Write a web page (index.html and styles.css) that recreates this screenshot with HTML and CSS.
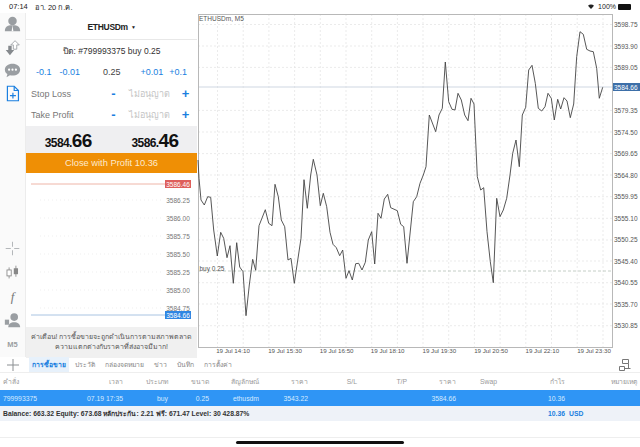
FILE: index.html
```html
<!DOCTYPE html>
<html lang="th">
<head>
<meta charset="utf-8">
<title>ETHUSDm</title>
<link rel="stylesheet" href="styles.css">
</head>
<body>
<div class="screen">
  <header class="status">
    <span class="clock">07:14</span><span>อา. 20 ก.ค.</span>
    <span class="status-right">
      <svg class="wifi" viewBox="0 0 10 8" width="6" height="5"><path d="M0 2.6a7 7 0 0 1 10 0L5 8z" fill="#222"/></svg>
      <span class="pct">100%</span>
      <span class="battery"></span>
    </span>
  </header>

  <main class="workspace">
    <nav class="rail">
      <div class="rail-group">
        <svg class="rail-icon" viewBox="0 0 20 20" width="20" height="20"><circle cx="10" cy="6" r="5" fill="#9a9ea2"/><path d="M1 18c0-5 3-6.500 6-7h6c3 .5 6 2 6 7z" fill="#9a9ea2"/><path d="M10 11l-1 7h2z" fill="#fff"/></svg>
        <svg class="rail-icon" viewBox="0 0 20 20" width="20" height="20"><path d="M5 8h4v5h3l-5 6-5-6h3z" fill="#85898d"/><path d="M13 2l5 5h-3v5h-4V7H8z" fill="#fff" stroke="#9a9ea2"/></svg>
        <svg class="rail-icon" viewBox="0 0 20 20" width="20" height="20"><path d="M10 2c5 0 9 3 9 7s-4 7-9 7c-1 0-2 0-3-.3L3 18l1-4c-2-1-3-3-3-5 0-4 4-7 9-7z" fill="#9a9ea2"/><circle cx="6" cy="9" r="1.300" fill="#fff"/><circle cx="10" cy="9" r="1.300" fill="#fff"/><circle cx="14" cy="9" r="1.300" fill="#fff"/></svg>
        <svg class="rail-icon" viewBox="0 0 20 20" width="20" height="20"><path d="M4 1.500h8l5 5v12H4z" fill="none" stroke="#1a7fe0" stroke-width="1.400"/><path d="M12 1.500v5h5M10.500 9v7M7 12.500h7" fill="none" stroke="#1a7fe0" stroke-width="1.400"/></svg>
      </div>
      <div class="rail-group">
        <svg class="rail-icon" viewBox="0 0 20 20" width="20" height="20"><path d="M10 2v6M10 12v6M2 10h6M12 10h6" stroke="#b4b7ba" stroke-width="1.200"/></svg>
        <svg class="rail-icon" viewBox="0 0 20 20" width="20" height="20"><path d="M6 4v13M14 2v13" stroke="#888" stroke-width="1"/><rect x="3.500" y="7" width="5" height="7" fill="#fff" stroke="#888"/><rect x="11.500" y="5" width="5" height="7" fill="#888"/></svg>
        <span class="rail-f">f</span>
        <svg class="rail-icon" viewBox="0 0 20 20" width="20" height="20"><circle cx="12" cy="6" r="4.500" fill="#9a9ea2"/><path d="M5 18c0-4 3-6 7-6s7 2 7 6z" fill="#9a9ea2"/><rect x="1" y="9" width="5" height="6" fill="#9a9ea2"/></svg>
        <span class="rail-m5">M5</span>
      </div>
    </nav>

    <section class="panel">
      <div class="symbol">ETHUSDm <span class="caret">▼</span></div>
      <div class="order-title">ปิด: #799993375 buy 0.25</div>
      <div class="volume">
        <span class="step">-0.1</span><span class="step">-0.01</span>
        <span class="vol-value">0.25</span>
        <span class="step step-near">+0.01</span><span class="step">+0.1</span>
      </div>
      <div class="level"><span class="level-name">Stop Loss</span><span class="adj">-</span><span class="level-value">ไม่อนุญาต</span><span class="adj">+</span></div>
      <div class="level"><span class="level-name">Take Profit</span><span class="adj">-</span><span class="level-value">ไม่อนุญาต</span><span class="adj">+</span></div>
      <div class="prices">
        <div class="price">3584.<b>66</b></div>
        <div class="price">3586.<b>46</b></div>
      </div>
      <button class="close-btn">Close with Profit 10.36</button>
      <svg class="mini" viewBox="26 172 171 154" width="171" height="154">
        <path class="mini-grid" d="M40 199H163M40 217H163M40 235H163M40 253H163M40 271H163M40 289H163M40 307H163"/>
        <path class="mini-ask" d="M31 183H165"/>
        <path class="mini-bid" d="M31 314H165"/>
        <rect x="165" y="179" width="26" height="8" fill="#de5f5b"/>
        <rect x="165" y="310" width="26" height="8" fill="#2f86e2"/>
        <text class="mini-tag" x="178" y="185.500">3586.46</text>
        <text class="mini-label" x="178" y="201.500">3586.25</text>
        <text class="mini-label" x="178" y="219.500">3586.00</text>
        <text class="mini-label" x="178" y="237.500">3585.75</text>
        <text class="mini-label" x="178" y="255.500">3585.50</text>
        <text class="mini-label" x="178" y="273.500">3585.25</text>
        <text class="mini-label" x="178" y="291.500">3585.00</text>
        <text class="mini-label" x="178" y="309.500">3584.75</text>
        <text class="mini-tag" x="178" y="316.500">3584.66</text>
      </svg>
      <div class="warning">ค่าเตือน! การซื้อขายจะถูกดำเนินการตามสภาพตลาด<br>ความแตกต่างกับราคาที่ส่งอาจมีมาก!</div>
    </section>

    <section class="chart">
      <svg class="chart-svg" viewBox="197 13 443 344" width="443" height="344">
        <path class="grid" d="M217.500 14V347M243.200 14V347M268.900 14V347M294.600 14V347M320.300 14V347M346 14V347M371.700 14V347M397.400 14V347M423 14V347M448.700 14V347M474.400 14V347M500.100 14V347M525.800 14V347M551.500 14V347M577.200 14V347M603 14V347"/>
        <path class="grid" d="M198 24.500H612M198 46H612M198 67.400H612M198 110.400H612M198 132H612M198 153.600H612M198 175H612M198 196.700H612M198 218.300H612M198 240H612M198 261H612M198 282.700H612M198 304H612M198 325.700H612"/>
        <path class="cur-line" d="M198 87H612"/>
        <path class="buy-line" d="M198 271H612"/>
        <rect class="frame" x="198.500" y="14.500" width="414" height="333"/>
        <polyline class="price-line" points="198,160 199,178.300 201,200 204.300,205 207.700,196.700 210.700,197.300 213.700,230 217.300,256 220.700,232.300 223.700,238.300 227,257.700 230,245.700 233.300,283.300 236.700,242.700 239.700,267 243,271.700 246,315.700 249.300,285 252.700,259.300 255.700,270.300 259,225.700 265.300,209.700 268.700,223.300 272,225.700 275,184.300 278.300,196.700 281.300,220 284.700,226.700 288,260 291,258.300 294.300,283.300 301,238.300 304,179.700 307.300,208.300 310.700,175 313.300,159.300 317,175 320.300,205.700 323.300,193.300 326.700,206.700 330,232.300 333,244.300 336.300,247.700 339.700,255.700 342.700,250 346,278.300 349,270.700 352.300,280 355.700,263.700 358.700,263.300 362,270 365.300,262.300 368.300,240 371.700,231.700 374.700,264 378,213.300 381,218.300 384.300,199 387.700,194.300 390.700,207.700 397.300,210.700 400.700,224.300 403.700,226.700 407,263.300 413.300,201.700 416.700,196.700 420,183.300 423.300,175 426,166.700 429.300,115 435.700,131.700 439,115 442.300,108.300 445.300,62 448.700,101.700 452,109.300 455,110 458,93.300 461.300,100 464.700,115 468,120.700 471,98.300 474,104 477.300,176.700 480.700,190 483.700,187.700 487,231.700 490.300,261.700 493.300,282.700 496.700,198.300 500,216.700 503.300,210 506.700,198.300 510,175 512.700,153.300 516,140 519.300,166.700 522.300,115 525.700,107.300 528.700,70 532,65.300 535.300,83.300 538.300,108.300 541.700,111 545,106.700 548,93.300 551.300,98.300 554.300,120 557.700,99.300 560.700,109 564,97.700 567,101 570.300,117.700 573.700,104 576.700,56.700 580,31.700 583.300,34.300 586.700,49.300 590,51 593.300,51.700 596.700,68.300 599.300,98.300 602.700,87.300"/>
        <text class="axis-y" x="199" y="21">ETHUSDm, M5</text>
        <text class="axis-y" x="199.500" y="270.500">buy 0.25</text>
        <rect x="613" y="83" width="27" height="8" fill="#3d6fa8"/>
        <text class="tag" x="614" y="89.500">3584.66</text>
        <text class="axis-y" x="614" y="27">3598.75</text>
        <text class="axis-y" x="614" y="48.500">3593.90</text>
        <text class="axis-y" x="614" y="70">3589.05</text>
        <text class="axis-y" x="614" y="113">3579.35</text>
        <text class="axis-y" x="614" y="134.500">3574.50</text>
        <text class="axis-y" x="614" y="156">3569.65</text>
        <text class="axis-y" x="614" y="177.500">3564.80</text>
        <text class="axis-y" x="614" y="199">3559.95</text>
        <text class="axis-y" x="614" y="220.500">3555.10</text>
        <text class="axis-y" x="614" y="242">3550.25</text>
        <text class="axis-y" x="614" y="263.500">3545.40</text>
        <text class="axis-y" x="614" y="285">3540.55</text>
        <text class="axis-y" x="614" y="306.500">3535.70</text>
        <text class="axis-y" x="614" y="328">3530.85</text>
        <text class="axis mid" x="233" y="353">19 Jul 14:10</text>
        <text class="axis mid" x="285" y="353">19 Jul 15:30</text>
        <text class="axis mid" x="336.700" y="353">19 Jul 16:50</text>
        <text class="axis mid" x="387.700" y="353">19 Jul 18:10</text>
        <text class="axis mid" x="439.300" y="353">19 Jul 19:30</text>
        <text class="axis mid" x="491" y="353">19 Jul 20:50</text>
        <text class="axis mid" x="542.300" y="353">19 Jul 22:10</text>
        <text class="axis mid" x="594" y="353">19 Jul 23:30</text>
      </svg>
    </section>
  </main>

  <nav class="tabs">
    <svg class="tab-plus" viewBox="0 0 12 12" width="12" height="12"><path d="M6 0v12M0 6h12" stroke="#8b8f92" stroke-width="1"/></svg>
    <span class="tab tab-active">การซื้อขาย</span>
    <span class="tab">ประวัติ</span>
    <span class="tab">กล่องจดหมาย</span>
    <span class="tab">ข่าว</span>
    <span class="tab">บันทึก</span>
    <span class="tab">การตั้งค่า</span>
    <svg class="tab-layout" viewBox="0 0 12 12" width="12" height="12"><path d="M3.500 .5h6v4h-6zM.5 7.500h5v4h-5zM5.500 9.500h6M9.500 4.500v5" fill="none" stroke="#777"/></svg>
  </nav>

  <section class="table">
    <div class="row row-head">
      <span class="c-left">คำสั่ง</span><span>เวลา</span><span>ประเภท</span><span>ขนาด</span><span>สัญลักษณ์</span><span>ราคา</span><span>S/L</span><span>T/P</span><span>ราคา</span><span>Swap</span><span>กำไร</span><span>หมายเหตุ</span>
    </div>
    <div class="row row-sel">
      <span class="c-left">799993375</span><span>07.19 17:35</span><span>buy</span><span>0.25</span><span>ethusdm</span><span>3543.22</span><span></span><span></span><span>3584.66</span><span></span><span>10.36</span><span></span>
    </div>
    <div class="row row-total">
      <span class="c-left c-wide">Balance: 663.32 Equity: 673.68 หลักประกัน: 2.21 ฟรี: 671.47 Level: 30 428.87%</span><span class="c-total">10.36</span><span class="c-usd">USD</span>
    </div>
  </section>

  <footer class="home"><span class="home-bar"></span></footer>
</div>
</body>
</html>
```
FILE: styles.css
```css
* { box-sizing: border-box; }
html, body { margin: 0; padding: 0; background: #fff; }
body { font-family: "Liberation Sans", "Noto Sans", sans-serif; color: #333; overflow: hidden; }
.screen { width: 640px; height: 447px; display: flex; flex-direction: column; }

.status { height: 13px; display: flex; align-items: center; padding: 0 9px; font-size: 7.5px; color: #222; gap: 7px; flex: none; }
.status-right { margin-left: auto; display: flex; align-items: center; gap: 2px; }
.pct { font-size: 7px; margin-left: 2px; }
.battery { width: 13px; height: 6px; background: #111; border-radius: 1px; }

.workspace { height: 344px; display: flex; flex: none; }
.rail { width: 26px; background: #fafafa; border-right: 1px solid #ececec; display: flex; flex-direction: column; justify-content: space-between; align-items: center; padding: 0 0 4px; }
.rail-group { display: flex; flex-direction: column; align-items: center; }
.rail-group:first-child { gap: 6px; padding-top: 3px; }
.rail-group:last-child { gap: 7px; }
.rail-icon { display: block; width: 17px; height: 17px; }
.rail-f { font: italic 13px/17px "Liberation Serif", serif; color: #777; height: 17px; }
.rail-m5 { font-size: 7.5px; line-height: 17px; color: #9a9ea2; font-weight: bold; }

.panel { width: 171px; display: flex; flex-direction: column; background: #fff; flex: none; }
.panel > * { flex: none; }
.symbol { height: 27px; padding-top: 1px; display: flex; align-items: center; justify-content: center; gap: 3px; font-size: 8.5px; letter-spacing: -.3px; font-weight: bold; color: #222; border-bottom: 1px solid #e8e8e8; }
.caret { font-size: 5px; }
.order-title { height: 21px; display: flex; align-items: center; justify-content: center; font-size: 8.5px; color: #333; }
.volume { height: 22px; display: flex; align-items: center; padding: 0 10px; font-size: 9px; color: #444; }
.step { color: #1a7fe0; margin-right: 8px; }
.step-near { margin-right: 6px; }
.vol-value { margin: 0 auto 0 15px; }
.volume .step:last-child { margin: 0; }
.level { height: 21px; display: flex; align-items: center; padding: 0 5px; font-size: 9px; color: #777; }
.level-name { width: 78px; }
.adj { width: 9px; text-align: center; color: #1a7fe0; font-size: 13px; font-weight: bold; line-height: 1; }
.level-value { width: 63px; text-align: center; color: #c4c4c4; }
.prices { height: 27px; margin-top: 1px; background: #efeff1; display: flex; align-items: center; justify-content: center; gap: 40px; padding-top: 2px; }
.price { font-size: 12px; font-weight: bold; color: #111; letter-spacing: -.6px; }
.price b { font-size: 19px; letter-spacing: -.7px; }
.close-btn { height: 20px; border: 0; padding: 0; background: #ef8f05; color: #fde9cc; font: 9.3px "Liberation Sans", sans-serif; display: block; width: 100%; }
.mini { display: block; }
.mini-grid { stroke: #e4e4e4; stroke-width: .6; stroke-dasharray: 1 3; fill: none; }
.mini-ask { stroke: #eeb5a8; stroke-width: 1; }
.mini-bid { stroke: #a9c4e2; stroke-width: 1; }
.mini-label { font-size: 6.5px; fill: #777; text-anchor: middle; }
.mini-tag { font-size: 6.5px; fill: #fff; text-anchor: middle; }
.warning { height: 31px; background: #f0f0f0; font-size: 7px; line-height: 10px; text-align: center; color: #555; padding-top: 5px; white-space: nowrap; }

.chart { width: 443px; flex: none; }
.chart-svg { display: block; }
.grid { stroke: #e2e2e2; stroke-width: .7; stroke-dasharray: 2 2; fill: none; }
.cur-line { stroke: #cfd7e2; stroke-width: 1; }
.buy-line { stroke: #b5c2b8; stroke-width: .8; stroke-dasharray: 3 2; }
.frame { fill: none; stroke: #b8b8b8; stroke-width: 1; }
.price-line { fill: none; stroke: #444; stroke-width: .9; }
.axis { font-size: 6.2px; fill: #555; }
.axis-y { font-size: 6.5px; fill: #555; }
.mid { text-anchor: middle; }
.tag { font-size: 6.5px; fill: #fff; }

.tabs { height: 16px; display: flex; align-items: center; font-size: 6.8px; color: #888; border-bottom: 1px solid #eee; flex: none; }
.tab-plus { margin: 0 10px 0 7px; flex: none; }
.tab { margin-right: 10px; }
.tab-active { color: #1a7fe0; font-weight: bold; background: #e7f1fb; padding: 2px 3px; margin-right: 6px; }
.tab-layout { margin-left: auto; margin-right: 9px; flex: none; }

.table { flex: none; }
.row { display: grid; grid-template-columns: 60px 63px 45px 41px 50px 49px 49px 50px 49px 41px 68px 72px; align-items: center; font-size: 6.8px; text-align: right; }
.c-left { text-align: left; padding-left: 3px; }
.row-head { height: 17px; color: #999; background: #fff; padding-bottom: 1px; }
.row-sel { height: 16px; background: #2f95f5; color: #d6eaff; }
.row-total { height: 15px; background: #eef2f8; color: #333; font-weight: bold; }
.c-wide { grid-column: 1 / 11; }
.c-total { color: #1a7fe0; }
.c-usd { color: #1a7fe0; text-align: left; padding-left: 4px; }

.home { flex: 1; margin-top: 16px; border-top: 1px solid #eee; display: flex; justify-content: center; align-items: flex-start; padding-top: 3px; }
.home-bar { width: 168px; height: 3px; border-radius: 2px; background: #111; }
```
